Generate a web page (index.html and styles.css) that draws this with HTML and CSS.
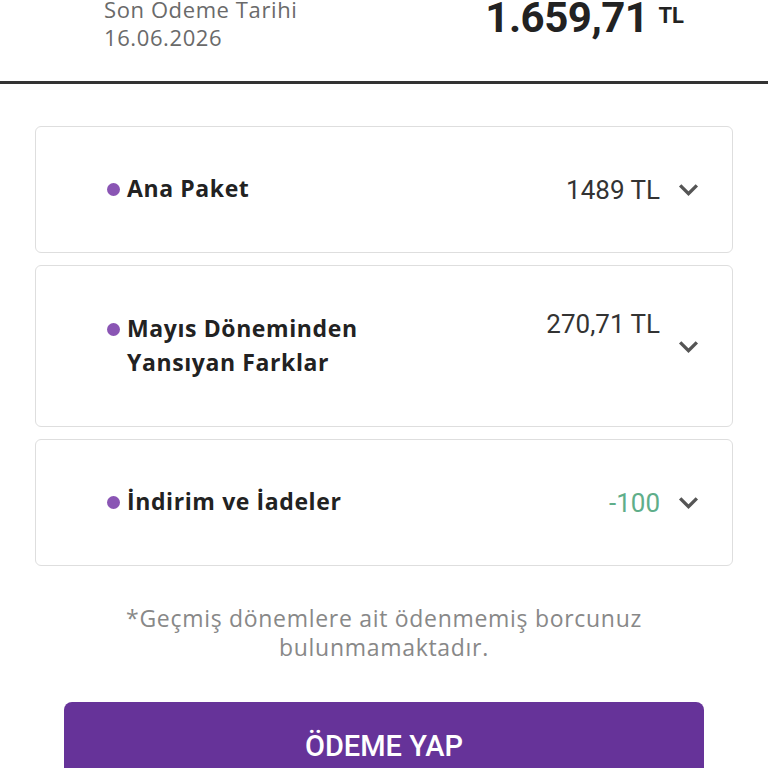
FILE: index.html
```html
<!DOCTYPE html>
<html lang="tr">
<head>
    <meta charset="UTF-8">
    <meta name="viewport" content="width=device-width, initial-scale=1.0">
    <title>Fatura Detayı</title>
    <link rel="stylesheet" href="styles.css">
</head>
<body>
    <div class="bill-header">
        <div class="due-date">
            <div class="due-label">Son Odeme Tarihi</div>
            <div class="due-value">16.06.2026</div>
        </div>
        <div class="total">
            <span class="total-amount">1.659,71</span>
            <span class="total-currency">TL</span>
        </div>
    </div>
    <div class="divider"></div>

    <div class="items">
        <div class="item">
            <div class="item-label"><span class="dot"></span><span>Ana Paket</span></div>
            <div class="item-value">1489 TL</div>
            <svg class="chevron" viewBox="0 0 24 24"><path d="M4 8l8 8 8-8"/></svg>
        </div>
        <div class="item item-tall">
            <div class="item-label"><span class="dot"></span><span>Mayıs Döneminden<br>Yansıyan Farklar</span></div>
            <div class="item-value">270,71 TL</div>
            <svg class="chevron" viewBox="0 0 24 24"><path d="M4 8l8 8 8-8"/></svg>
        </div>
        <div class="item">
            <div class="item-label"><span class="dot"></span><span>İndirim ve İadeler</span></div>
            <div class="item-value discount">-100</div>
            <svg class="chevron" viewBox="0 0 24 24"><path d="M4 8l8 8 8-8"/></svg>
        </div>
    </div>

    <p class="note">*Geçmiş dönemlere ait ödenmemiş borcunuz<br>bulunmamaktadır.</p>

    <div class="actions">
        <button class="pay-btn">ÖDEME YAP</button>
    </div>
</body>
</html>
```

FILE: styles.css
```css
body {
    margin: 0;
    font-family: Roboto, "Liberation Sans", sans-serif;
    background: #fff;
    color: #222;
    overflow: hidden;
}
.bill-header {
    display: flex;
    justify-content: space-between;
    align-items: flex-start;
    margin-top: -5px;
    padding: 0 84px 0 104px;
    height: 86px;
}
.due-label,
.due-value {
    font-family: "Open Sans", "Liberation Sans", sans-serif;
    font-size: 22px;
    line-height: 28px;
    letter-spacing: 0.6px;
    color: #6a6a6a;
}
.total {
    display: flex;
    align-items: flex-start;
    gap: 10px;
    margin-top: -2px;
}
.total-amount {
    font-size: 42px;
    font-weight: 700;
    letter-spacing: -0.5px;
    color: #222;
}
.total-currency {
    font-size: 22px;
    font-weight: 700;
    margin-top: 10px;
    color: #222;
}
.divider {
    height: 3px;
    background: #333;
}
.items {
    display: flex;
    flex-direction: column;
    gap: 12px;
    margin: 42px 35px 0;
}
.item {
    display: flex;
    align-items: center;
    height: 127px;
    box-sizing: border-box;
    padding: 0 31px 0 71px;
    border: 1px solid #dedede;
    border-radius: 6px;
}
.item-tall {
    height: 162px;
}
.item-label {
    flex: 1;
    display: flex;
    align-items: center;
    gap: 7px;
    font-family: "Open Sans", "Liberation Sans", sans-serif;
    font-size: 23px;
    font-weight: 700;
    letter-spacing: 0.6px;
    line-height: 34px;
    color: #222;
    margin-top: -3px;
}
.item-tall .item-label {
    align-items: flex-start;
}
.item-tall .dot {
    margin-top: 12px;
}
.dot {
    width: 13px;
    height: 13px;
    border-radius: 50%;
    background: #8a55b4;
    flex-shrink: 0;
    margin-top: 2px;
}
.item-value {
    font-size: 26px;
    color: #333;
    margin-right: 16px;
}
.item-tall .item-value {
    align-self: flex-start;
    margin-top: 43px;
}
.discount {
    color: #5fae8a;
}
.chevron {
    width: 25px;
    height: 25px;
    fill: none;
    stroke: #555;
    stroke-width: 3.2;
}
.note {
    margin: 38px 0 0;
    text-align: center;
    font-family: "Open Sans", "Liberation Sans", sans-serif;
    font-size: 23px;
    line-height: 29px;
    letter-spacing: 0.7px;
    color: #888;
}
.actions {
    padding: 40px 64px 0;
}
.pay-btn {
    width: 100%;
    height: 90px;
    border: none;
    border-radius: 8px;
    background: #663399;
    color: #fff;
    font-family: Roboto, "Liberation Sans", sans-serif;
    font-size: 29px;
    font-weight: 500;
    padding-bottom: 3px;
}
```
